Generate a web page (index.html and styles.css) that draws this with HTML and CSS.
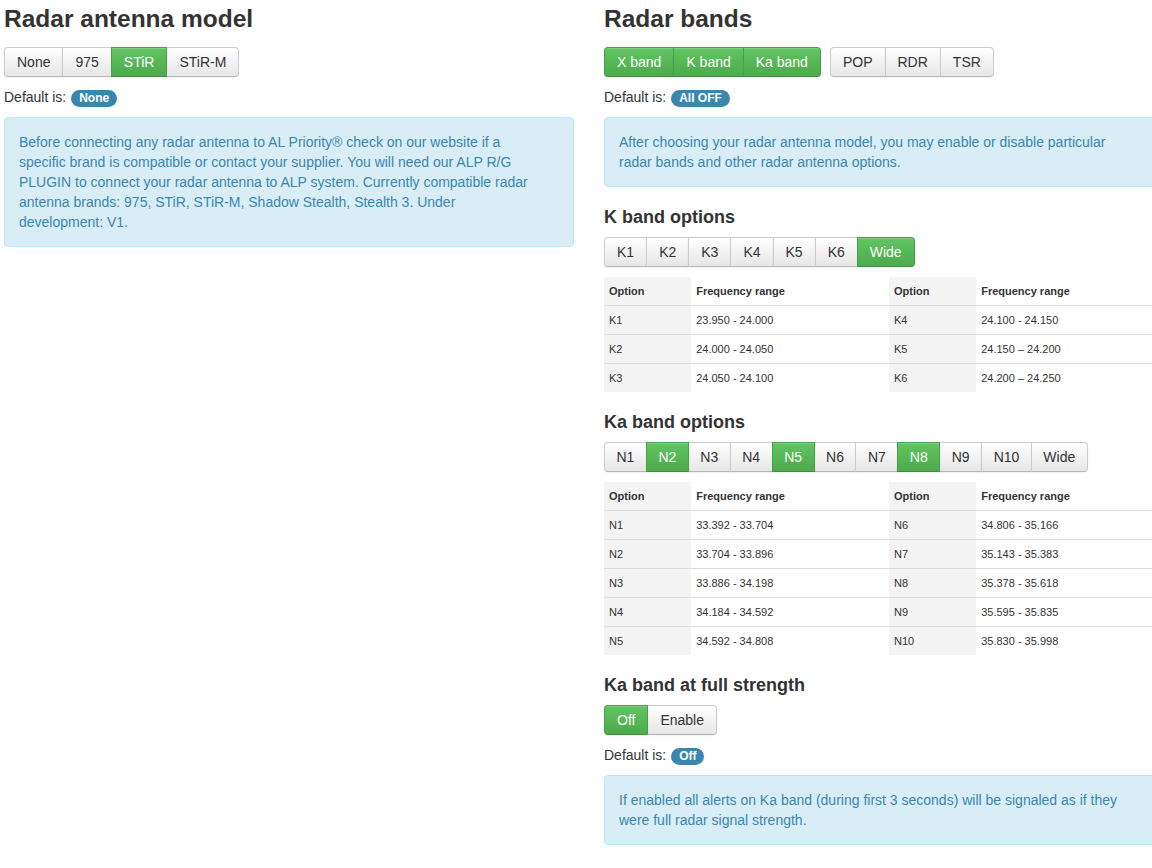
FILE: index.html
```html
<!DOCTYPE html>
<html lang="en">
<head>
<meta charset="utf-8">
<title>Radar settings</title>
<link rel="stylesheet" href="styles.css">
</head>
<body>
<div class="page">
  <section class="col">
    <h3 class="title">Radar antenna model</h3>
    <div class="toolbar">
      <div class="btn-group">
        <span class="btn">None</span><span class="btn">975</span><span class="btn on">STiR</span><span class="btn">STiR-M</span>
      </div>
    </div>
    <div class="default">Default is: <span class="badge">None</span></div>
    <div class="alert">Before connecting any radar antenna to AL Priority® check on our website if a specific brand is compatible or contact your supplier. You will need our ALP R/G PLUGIN to connect your radar antenna to ALP system. Currently compatible radar antenna brands: 975, STiR, STiR-M, Shadow Stealth, Stealth 3. Under development: V1.</div>
  </section>

  <section class="col">
    <h3 class="title">Radar bands</h3>
    <div class="toolbar">
      <div class="btn-group">
        <span class="btn on">X band</span><span class="btn on">K band</span><span class="btn on">Ka band</span>
      </div>
      <div class="btn-group">
        <span class="btn">POP</span><span class="btn">RDR</span><span class="btn">TSR</span>
      </div>
    </div>
    <div class="default">Default is: <span class="badge">All OFF</span></div>
    <div class="alert">After choosing your radar antenna model, you may enable or disable particular radar bands and other radar antenna options.</div>

    <h4 class="sub">K band options</h4>
    <div class="toolbar">
      <div class="btn-group">
        <span class="btn">K1</span><span class="btn">K2</span><span class="btn">K3</span><span class="btn">K4</span><span class="btn">K5</span><span class="btn">K6</span><span class="btn on">Wide</span>
      </div>
    </div>
    <table class="freq">
      <colgroup><col class="w1"><col class="w2"><col class="w1"><col class="w2"></colgroup>
      <tr><th class="opt">Option</th><th>Frequency range</th><th class="opt">Option</th><th>Frequency range</th></tr>
      <tr><td class="opt">K1</td><td>23.950 - 24.000</td><td class="opt">K4</td><td>24.100 - 24.150</td></tr>
      <tr><td class="opt">K2</td><td>24.000 - 24.050</td><td class="opt">K5</td><td>24.150 – 24.200</td></tr>
      <tr><td class="opt">K3</td><td>24.050 - 24.100</td><td class="opt">K6</td><td>24.200 – 24.250</td></tr>
    </table>

    <h4 class="sub">Ka band options</h4>
    <div class="toolbar">
      <div class="btn-group tight">
        <span class="btn">N1</span><span class="btn on">N2</span><span class="btn">N3</span><span class="btn">N4</span><span class="btn on">N5</span><span class="btn">N6</span><span class="btn">N7</span><span class="btn on">N8</span><span class="btn">N9</span><span class="btn">N10</span><span class="btn">Wide</span>
      </div>
    </div>
    <table class="freq">
      <colgroup><col class="w1"><col class="w2"><col class="w1"><col class="w2"></colgroup>
      <tr><th class="opt">Option</th><th>Frequency range</th><th class="opt">Option</th><th>Frequency range</th></tr>
      <tr><td class="opt">N1</td><td>33.392 - 33.704</td><td class="opt">N6</td><td>34.806 - 35.166</td></tr>
      <tr><td class="opt">N2</td><td>33.704 - 33.896</td><td class="opt">N7</td><td>35.143 - 35.383</td></tr>
      <tr><td class="opt">N3</td><td>33.886 - 34.198</td><td class="opt">N8</td><td>35.378 - 35.618</td></tr>
      <tr><td class="opt">N4</td><td>34.184 - 34.592</td><td class="opt">N9</td><td>35.595 - 35.835</td></tr>
      <tr><td class="opt">N5</td><td>34.592 - 34.808</td><td class="opt">N10</td><td>35.830 - 35.998</td></tr>
    </table>

    <h4 class="sub">Ka band at full strength</h4>
    <div class="toolbar">
      <div class="btn-group">
        <span class="btn on">Off</span><span class="btn">Enable</span>
      </div>
    </div>
    <div class="default">Default is: <span class="badge">Off</span></div>
    <div class="alert">If enabled all alerts on Ka band (during first 3 seconds) will be signaled as if they were full radar signal strength.</div>
  </section>
</div>
</body>
</html>
```

FILE: styles.css
```css
html, body {
  margin: 0;
  padding: 0;
  overflow: hidden;
  background: #fff;
}

body {
  font-family: "Liberation Sans", Arial, sans-serif;
  font-size: 14px;
  line-height: 20px;
  color: #333;
}

.page {
  display: grid;
  grid-template-columns: 570px 570px;
  column-gap: 30px;
  padding-left: 4px;
  width: 1170px;
  align-items: start;
}

.col {
  min-width: 0;
}

.title {
  margin: 5px 0 0;
  font-size: 24.5px;
  line-height: 27px;
  font-weight: bold;
  color: #333;
}

.sub {
  margin: 20px 0 0;
  font-size: 18px;
  line-height: 20px;
  font-weight: bold;
  color: #333;
}

.title + .toolbar {
  margin-top: 15px;
}

.toolbar {
  display: flex;
  gap: 9px;
  margin-top: 10px;
}

.btn-group {
  display: inline-flex;
}

.btn {
  display: inline-block;
  padding: 4px 12px;
  font-size: 14px;
  line-height: 20px;
  color: #333;
  background: linear-gradient(#ffffff, #e6e6e6);
  border: 1px solid #cccccc;
  border-bottom-color: #b8b8b8;
  box-shadow: inset 0 1px 0 rgba(255, 255, 255, 0.2), 0 1px 2px rgba(0, 0, 0, 0.06);
  white-space: nowrap;
}

.tight .btn {
  padding-left: 11.5px;
  padding-right: 11.5px;
}

.btn + .btn {
  margin-left: -1px;
}

.btn:first-child {
  border-radius: 4px 0 0 4px;
}

.btn:last-child {
  border-radius: 0 4px 4px 0;
}

.btn.on {
  color: #fff;
  background: linear-gradient(#62c462, #4cab4c);
  border-color: #4a9f4a;
  border-bottom-color: #3f8f3f;
  position: relative;
}

.default {
  margin-top: 10px;
  line-height: 20px;
}

.badge {
  display: inline-block;
  padding: 2px 8px;
  font-size: 12px;
  line-height: 13px;
  font-weight: bold;
  color: #fff;
  background: #3a87ad;
  border-radius: 9px;
  margin-left: 1px;
}

.alert {
  margin-top: 10px;
  padding: 14px 35px 14px 14px;
  background: #d9edf7;
  border: 1px solid #bce8f1;
  border-radius: 4px;
  color: #3a87ad;
  line-height: 20px;
}

.freq {
  margin-top: 10px;
  width: 100%;
  border-collapse: collapse;
  table-layout: fixed;
  font-size: 11px;
  color: #333;
}

.freq .w1 {
  width: 15.3%;
}

.freq .w2 {
  width: 34.7%;
}

.freq th,
.freq td {
  padding: 5px;
  line-height: 18px;
  text-align: left;
  border-top: 1px solid #dddddd;
}

.freq tr:first-child th {
  border-top: 0;
}

.freq th {
  font-weight: bold;
}

.freq .opt {
  background: #f4f4f4;
}
```
